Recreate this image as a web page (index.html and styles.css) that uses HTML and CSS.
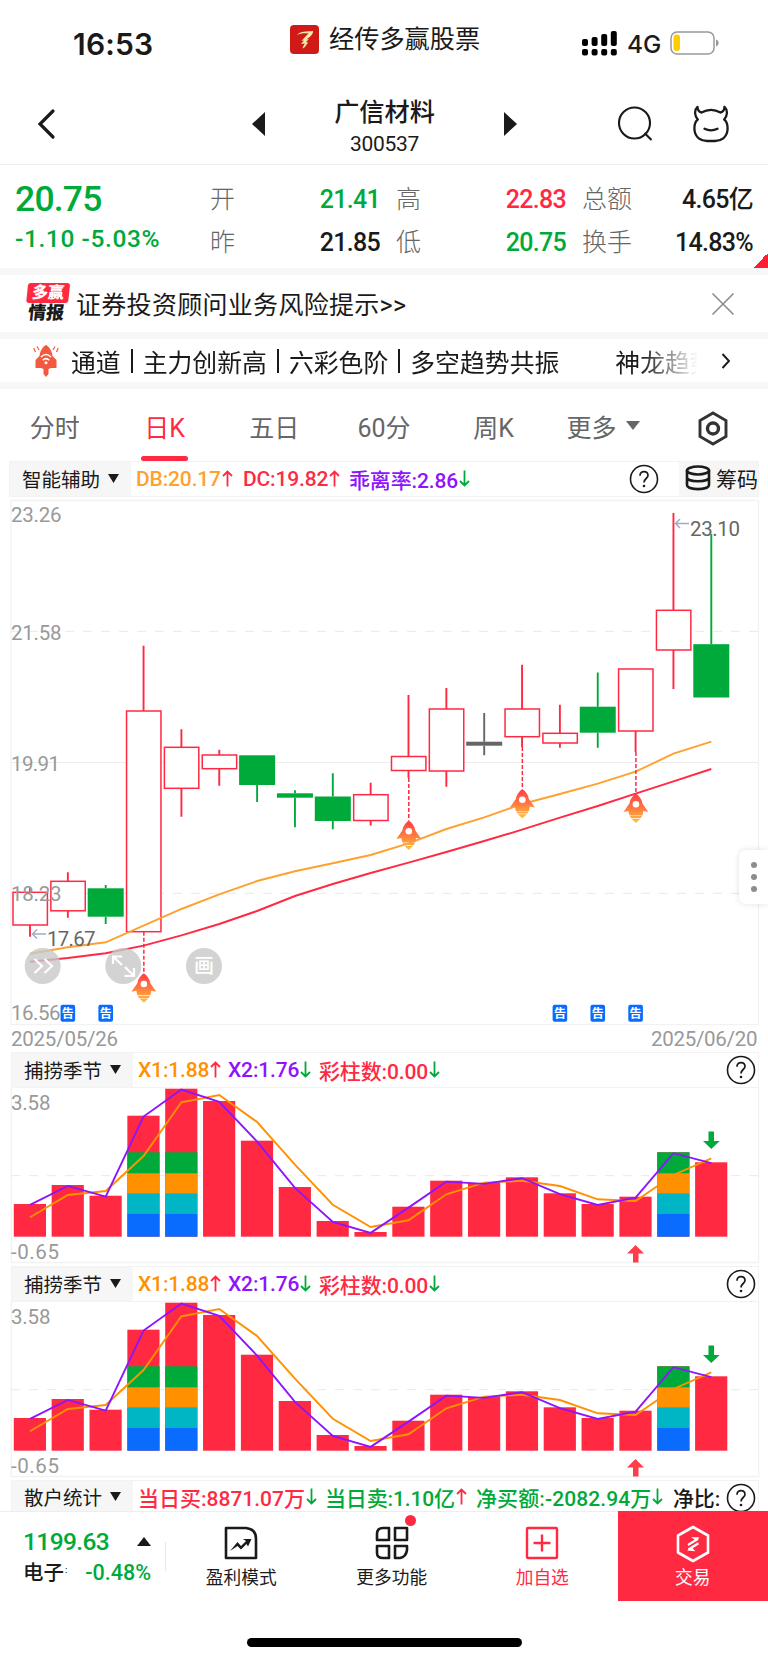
FILE: index.html
```html
<!DOCTYPE html>
<html lang="zh-CN">
<head>
  <meta charset="UTF-8">
  <title>广信材料 300537</title>
  <link rel="stylesheet" href="styles.css">
</head>

<body>
  <!-- shared icons -->
  <svg class="defs" width="0" height="0">
    <symbol id="up" viewBox="0 0 11 17"><path d="M5.5 16.500V1.500M1 6L5.500 1.500L10 6" fill="none" stroke="currentColor" stroke-width="1.800"/></symbol>
    <symbol id="down" viewBox="0 0 11 17"><path d="M5.500 .5V15.500M1 11L5.500 15.500L10 11" fill="none" stroke="currentColor" stroke-width="1.800"/></symbol>
    <symbol id="help" viewBox="0 0 30 30">
      <circle cx="15" cy="15" r="13.500" fill="none" stroke="currentColor" stroke-width="1.600"/>
      <path d="M11 11.800C11 9 12.700 7.600 15 7.600S19 9.200 19 11.500C19 14.500 15 14.600 15 18.400" fill="none" stroke="currentColor" stroke-width="1.700"/>
      <circle cx="15" cy="22" r="1.300" fill="currentColor"/>
    </symbol>
    <linearGradient id="flame" x1="0" y1="0" x2="0" y2="1">
      <stop offset="0" stop-color="#ff3b45"/><stop offset=".55" stop-color="#ff8040"/><stop offset="1" stop-color="#ffc53d"/>
    </linearGradient>
  </svg>

  <!-- Status bar -->
  <div class="statusBar">
    <div class="time">16:53</div>
    <div class="appName">
      <svg width="29" height="29" viewBox="0 0 29 29">
        <rect width="29" height="29" rx="4" fill="#d01a18"/>
        <path d="M7 10C10 6 17 6.500 23 6C23.500 9 20 12 16.500 14.500L19 14L16 17L18 17.500C16 20 15 23 12.500 23.500C13 21 14 20 15 18.500L11 19L14 15.500L11.500 16L15 12L18.500 8.500C14 8 10 8.500 7 10Z" fill="#f6e6a8"/>
      </svg>
      <span>经传多赢股票</span>
    </div>
    <div class="signal">
      <svg width="36" height="25" viewBox="0 0 36 25">
        <g fill="#000">
          <rect x="0" y="8" width="6" height="7" rx="2"/><rect x="9.600" y="6" width="6" height="9" rx="2"/>
          <rect x="19.200" y="3" width="6" height="12" rx="2"/><rect x="28.800" y="0" width="6" height="15" rx="2"/>
          <rect x="0" y="18" width="6" height="6.500" rx="2"/><rect x="9.600" y="18" width="6" height="6.500" rx="2"/>
          <rect x="19.200" y="18" width="6" height="6.500" rx="2"/><rect x="28.800" y="18" width="6" height="6.500" rx="2"/>
        </g>
      </svg>
      <span>4G</span>
      <svg width="50" height="24" viewBox="0 0 50 24">
        <rect x="1" y="1" width="43" height="22" rx="6" fill="#fff" stroke="#999" stroke-width="1.500"/>
        <rect x="3.500" y="3.500" width="6.500" height="16.500" rx="3" fill="#ffcc00"/>
        <path d="M46 8.500C49.500 9.500 49.500 14 46 15.500Z" fill="#999"/>
      </svg>
    </div>
  </div>

  <!-- Title -->
  <div class="navBar">
    <svg class="back" width="20" height="32" viewBox="0 0 20 32"><path d="M17 3L4 16L17 29" fill="none" stroke="#1a1a1a" stroke-width="3.200" stroke-linecap="round"/></svg>
    <div class="stockTitle">
      <svg width="13" height="24" viewBox="0 0 13 24"><path d="M13 0V24L0 12Z" fill="#1a1a1a"/></svg>
      <div class="names">
        <div class="name">广信材料</div>
        <div class="code">300537</div>
      </div>
      <svg width="13" height="24" viewBox="0 0 13 24"><path d="M0 0V24L13 12Z" fill="#1a1a1a"/></svg>
    </div>
    <div class="navIcons">
      <svg width="36" height="36" viewBox="0 0 36 36" fill="none" stroke="#1a1a1a" stroke-width="2.100">
        <circle cx="17.500" cy="17" r="15.500"/><path d="M27.500 27L34.500 34"/>
      </svg>
      <svg width="36" height="38" viewBox="0 0 36 38" fill="none" stroke="#1a1a1a" stroke-width="2.300" stroke-linecap="round" stroke-linejoin="round">
        <path d="M4.500 1.800C1 5 1.500 11 4.800 14.500C1.500 17 1.200 21 1.500 25C2.200 32.500 8 36 14 36H22C28 36 33.800 32.500 34.500 25C34.800 21 34.500 17 31.200 14.500C34.500 11 35 5 31.500 1.800C31.500 5 30 7 27.500 7.500C21 3.800 15 3.800 8.500 7.500C6 7 4.500 5 4.500 1.800Z"/>
        <path d="M11.500 23.800Q18 27 24.500 23.800"/>
      </svg>
    </div>
  </div>

  <!-- Quote -->
  <div class="quote">
    <div class="last">
      <div class="price">20.75</div>
      <div class="change">-1.10 -5.03%</div>
    </div>
    <div class="pair"><div><label>开</label><b class="green">21.41</b></div><div><label>昨</label><b>21.85</b></div></div>
    <div class="pair"><div><label>高</label><b class="red">22.83</b></div><div><label>低</label><b class="green">20.75</b></div></div>
    <div class="pair"><div><label>总额</label><b>4.65亿</b></div><div><label>换手</label><b>14.83%</b></div></div>
  </div>

  <div class="notice">
    <div class="newsLogo"><div class="newsTop">多赢</div><div class="newsBottom">情报</div></div>
    <span class="noticeText">证券投资顾问业务风险提示&gt;&gt;</span>
    <svg width="24" height="24" viewBox="0 0 24 24"><path d="M1.500 1.500L22.500 22.500M22.500 1.500L1.500 22.500" stroke="#8c8c8c" stroke-width="1.600"/></svg>
  </div>

  <div class="ticker">
    <svg class="tickerIcon" width="26" height="32" viewBox="0 0 26 32">
      <path d="M13 0C16.500 2 19 6 19.500 11L23.500 15V23H18L15.500 24V29L13 32L10.500 29V24L8 23H2.500V15L6.500 11C7 6 9.500 2 13 0Z" fill="#f4593f"/>
      <path d="M8 12Q13 7 18 12M9.800 15.200Q13 12 16.200 15.200" fill="none" stroke="#fff" stroke-width="1.600"/>
      <circle cx="13" cy="17.800" r="1.500" fill="#fff"/>
      <path d="M4 1.500L6 5M.8 3L2.500 7M22 1.500L20 5M25.200 3L23.500 7" stroke="#f4593f" stroke-width="1.200"/>
    </svg>
    <div class="tickerText"><span>通道</span><i></i><span>主力创新高</span><i></i><span>六彩色阶</span><i></i><span>多空趋势共振</span><span class="next">神龙趋势</span></div>
    <svg width="10" height="16" viewBox="0 0 10 16"><path d="M1.500 1L8 8L1.500 15" fill="none" stroke="#1a1a1a" stroke-width="1.900"/></svg>
  </div>

  <!-- Period tabs -->
  <div class="tabs">
    <div>分时</div>
    <div class="active">日K</div>
    <div>五日</div>
    <div>60分</div>
    <div>周K</div>
    <div>更多<svg width="14" height="9" viewBox="0 0 14 9"><path d="M0 0H14L7 9Z" fill="#666"/></svg></div>
    <div class="gear">
      <svg width="30" height="35" viewBox="0 0 30 35" fill="none" stroke="#333">
        <path d="M15 2L28 9.500V25.500L15 33L2 25.500V9.500Z" stroke-width="2.900"/><circle cx="15" cy="17.500" r="5.500" stroke-width="3.400"/>
      </svg>
    </div>
  </div>

  <div class="toolbar main">
    <div class="picker">智能辅助<svg width="11" height="9" viewBox="0 0 11 9"><path d="M0 0H11L5.500 9Z" fill="#1a1a1a"/></svg></div>
    <div class="values">
      <span class="orangeSoft w107">DB:20.17<svg class="red"><use href="#up"/></svg></span>
      <span class="red w106">DC:19.82<svg class="red"><use href="#up"/></svg></span>
      <span class="purple">乖离率:2.86<svg class="green"><use href="#down"/></svg></span>
    </div>
    <svg class="help"><use href="#help"/></svg>
    <div class="chips">
      <svg width="26" height="26" viewBox="0 0 26 26" fill="none" stroke="#1a1a1a" stroke-width="2.600">
        <ellipse cx="13" cy="5.500" rx="11" ry="4"/>
        <path d="M2 5.500V20C2 25.500 24 25.500 24 20V5.500M2 12.500C2 17.500 24 17.500 24 12.500"/>
      </svg>
      筹码
    </div>
  </div>

  <div class="kline">
    <svg id="kChart" width="768" height="555" viewBox="0 497 768 555"></svg>
    <div class="drawer"><i></i><i></i><i></i></div>
  </div>

  <div class="toolbar">
    <div class="picker">捕捞季节<svg width="11" height="9" viewBox="0 0 11 9"><path d="M0 0H11L5.500 9Z" fill="#1a1a1a"/></svg></div>
    <div class="values">
      <span class="orange w90">X1:1.88<svg class="red"><use href="#up"/></svg></span>
      <span class="purple w91">X2:1.76<svg class="green"><use href="#down"/></svg></span>
      <span class="red">彩柱数:0.00<svg class="green"><use href="#down"/></svg></span>
    </div>
    <svg class="help"><use href="#help"/></svg>
  </div>
  <svg class="subChart" width="768" height="178" viewBox="0 1088 768 178"></svg>

  <div class="toolbar">
    <div class="picker">捕捞季节<svg width="11" height="9" viewBox="0 0 11 9"><path d="M0 0H11L5.500 9Z" fill="#1a1a1a"/></svg></div>
    <div class="values">
      <span class="orange w90">X1:1.88<svg class="red"><use href="#up"/></svg></span>
      <span class="purple w91">X2:1.76<svg class="green"><use href="#down"/></svg></span>
      <span class="red">彩柱数:0.00<svg class="green"><use href="#down"/></svg></span>
    </div>
    <svg class="help"><use href="#help"/></svg>
  </div>
  <svg class="subChart" width="768" height="178" viewBox="0 1088 768 178"></svg>

  <div class="toolbar last-row">
    <div class="picker">散户统计<svg width="11" height="9" viewBox="0 0 11 9"><path d="M0 0H11L5.500 9Z" fill="#1a1a1a"/></svg></div>
    <div class="values">
      <span class="red w187">当日买:8871.07万<svg class="green"><use href="#down"/></svg></span>
      <span class="green w151">当日卖:1.10亿<svg class="red"><use href="#up"/></svg></span>
      <span class="green w197">净买额:-2082.94万<svg class="green"><use href="#down"/></svg></span>
      <span>净比:</span>
    </div>
    <svg class="help"><use href="#help"/></svg>
  </div>

  <!-- Bottom bar -->
  <div class="bottomBar">
    <div class="sector">
      <div class="row"><span class="index">1199.63</span><svg width="14" height="9" viewBox="0 0 14 9"><path d="M7 0L14 9H0Z" fill="#1a1a1a"/></svg></div>
      <div class="row"><span class="sectorName">电子<small>:</small></span><span class="pct">-0.48%</span></div>
    </div>
    <div class="item">
      <svg width="34" height="34" viewBox="0 0 34 34" fill="none" stroke="#1a1a1a" stroke-width="2.600">
        <path d="M2 2H22Q32 3 32 13V32H2Z" stroke-linejoin="round"/>
        <path d="M6 25L13.500 16L17 20L22 15L19 13H27.500L24 20.500L22.500 18L17 23.500L13.500 20Z" fill="#1a1a1a" stroke="none"/>
      </svg>
      <span>盈利模式</span>
    </div>
    <div class="item">
      <svg width="34" height="34" viewBox="0 0 34 34" fill="none" stroke="#1a1a1a" stroke-width="2.600">
        <path d="M14 2H8Q2 2 2 8V14H14ZM20 2H32V14H20ZM2 20H14V32H8Q2 32 2 27ZM20 20H32V24Q31 31 25 32H20Z" stroke-linejoin="round"/>
      </svg>
      <span>更多功能</span>
      <i class="dot"></i>
    </div>
    <div class="item red">
      <svg width="34" height="34" viewBox="0 0 34 34" fill="none" stroke="#ff2a42" stroke-width="2.400">
        <rect x="2" y="2" width="30" height="30" rx="1"/><path d="M17 8.500V25.500M8.500 17H25.500"/>
      </svg>
      <span>加自选</span>
    </div>
    <div class="item trade">
      <svg width="34" height="38" viewBox="0 0 34 38" fill="none" stroke="#fff" stroke-width="2.600">
        <path d="M17 2L32 10.500V27.500L17 36L2 27.500V10.500Z" stroke-linejoin="round"/>
        <path d="M12 20L22 13.800M22.500 18.200L12.500 24.500" stroke-width="2.200"/>
        <path d="M15 12.300H23.500L20 16.500L18.500 14.500ZM19.500 26.200L11 25.500L15.500 21.800L17 23.800Z" fill="#fff" stroke="none"/>
      </svg>
      <span>交易</span>
    </div>
  </div>
  <div class="homeIndicator"></div>

  <script src="chart.js"></script>
</body>
</html>
```

FILE: styles.css
```css
* { box-sizing: border-box; margin: 0; padding: 0; }
body {
  width: 768px;
  height: 1662px;
  font-family: Roboto, "Noto Sans CJK SC", sans-serif;
  background: #fff;
  color: #1a1a1a;
  overflow: hidden;
}
svg { display: block; flex-shrink: 0; }
.defs { position: absolute; }

.red { color: #ff2a42; }
.green { color: #00aa3a; }
.orange { color: #ff9100; }
.orangeSoft { color: #ffa12e; }
.purple { color: #9013fe; }

/* Status bar */
.statusBar {
  height: 80px;
  display: grid;
  grid-template-columns: 217px 292px 1fr;
  padding-left: 73px;
}
.time {
  font: 600 30px/36px Inter, sans-serif;
  letter-spacing: 0.2px;
  padding-top: 26px;
}
.appName {
  display: flex;
  gap: 10px;
  padding-top: 25px;
  font-size: 25.200px;
  line-height: 30px;
}
.signal {
  display: flex;
  gap: 9px;
  padding-top: 31px;
  font: 500 24.500px/27px Inter, sans-serif;
}

/* Title */
.navBar {
  height: 85px;
  display: flex;
  align-items: center;
  border-bottom: 1px solid #e9eeee;
  padding: 4px 39px 0 36px;
}
.stockTitle {
  display: flex;
  align-items: center;
  justify-content: space-between;
  width: 265px;
  margin-left: 196px;
}
.names { text-align: center; padding-top: 5px; }
.name { font-size: 25.200px; font-weight: 500; line-height: 29px; }
.code { font-size: 21px; line-height: 24px; margin-top: 5px; letter-spacing: -0.3px; }
.navIcons {
  display: flex;
  gap: 40px;
  margin-left: auto;
  align-items: center;
}

/* Quote */
.quote {
  height: 103px;
  display: grid;
  grid-template-columns: 179px 170px 170px 171px;
  column-gap: 16px;
  padding-left: 15px;
  background: linear-gradient(135deg, transparent 50%, #ff1f35 50%) right bottom / 15px 15px no-repeat;
}
.last { color: #00aa3a; font-weight: 500; padding-top: 13px; }
.price { font-size: 35.5px; line-height: 42px; letter-spacing: -0.8px; }
.change { font-size: 24.500px; line-height: 37px; letter-spacing: 0.6px; white-space: nowrap; }
.pair { padding-top: 13px; }
.pair div {
  display: flex;
  justify-content: space-between;
  font-size: 25px;
  line-height: 43px;
}
.pair label { color: #666; font-weight: 300; }
.pair b { font-weight: 500; letter-spacing: -0.7px; }

.notice {
  height: 71px;
  border: solid #f7f7f7;
  border-width: 7px 0;
  display: flex;
  align-items: center;
  padding: 0 33px 0 26px;
}
.newsLogo { width: 42px; margin-right: 8px; padding-bottom: 4px; transform: skewX(-6deg); font-weight: 900; text-align: center; }
.newsTop { background: #ff2a42; color: #fff; border-radius: 3px; font-size: 16px; line-height: 20px; height: 20px; }
.newsBottom { font-size: 18px; line-height: 20px; height: 18px; }
.noticeText { flex: 1; font-size: 25px; letter-spacing: 0.3px; padding-bottom: 1px; }

.ticker {
  height: 50px;
  border-bottom: 7px solid #f7f7f7;
  display: flex;
  align-items: center;
  padding-left: 33px;
}
.tickerText {
  display: flex;
  align-items: center;
  width: 633px;
  margin: 0 17px 0 12px;
  font-size: 24.850px;
  white-space: nowrap;
  overflow: hidden;
  -webkit-mask-image: linear-gradient(90deg, #000 90%, transparent 99%);
}
.tickerText i { width: 2px; height: 24px; background: #1a1a1a; margin: 0 10px; flex-shrink: 0; }
.tickerText .next { margin-left: 56px; }

/* Period tabs */
.tabs {
  height: 72px;
  display: grid;
  grid-template-columns: repeat(7, 1fr);
  color: #666;
  font-size: 25px;
}
.tabs div {
  position: relative;
  display: flex;
  align-items: center;
  justify-content: center;
  gap: 10px;
  padding-top: 1px;
}
.tabs .gear { padding-top: 6px; }
.tabs .active { color: #ff2a42; }
.tabs .active::after {
  content: "";
  position: absolute;
  bottom: 0;
  left: 31px;
  width: 47px;
  height: 5px;
  border-radius: 3px;
  background: #ff2a42;
}

/* Indicator bars */
.toolbar {
  height: 36px;
  margin: 0 9px 0 11px;
  border: 1px solid #f2f2f2;
  display: flex;
  align-items: center;
  font-size: 21px;
  white-space: nowrap;
}
.toolbar.main { margin-left: 9px; }
.toolbar.last-row { height: 31px; border-bottom: 0; overflow: hidden; align-items: flex-start; }
.toolbar.last-row .picker,
.toolbar.last-row .values { height: 32px; }
.toolbar.last-row .help { margin-top: 2px; }
.picker {
  width: 121px;
  height: 100%;
  background: #f6f6f6;
  display: flex;
  align-items: center;
  gap: 8px;
  padding: 0 0 2px 12px;
  font-size: 19.500px;
}
.values { display: flex; align-items: center; flex: 1; padding: 0 0 1px 5px; font-weight: 500; letter-spacing: -0.15px; }
.values span { display: flex; align-items: center; gap: 1px; }
.values svg { width: 11px; height: 17px; }
.w90 { width: 90px; }
.w91 { width: 91px; }
.w106 { width: 106px; }
.w107 { width: 107px; }
.w151 { width: 151px; }
.w187 { width: 187px; letter-spacing: 0; }
.w197 { width: 197px; letter-spacing: 0.1px; }
.help { width: 30px; height: 30px; margin-right: 2px; }
.main .help { margin-right: 20px; }
.chips {
  width: 79px;
  height: 100%;
  background: #f6f6f6;
  display: flex;
  align-items: center;
  gap: 5px;
  padding: 0 0 2px 6px;
}

.kline { position: relative; height: 555px; }
.drawer {
  position: absolute;
  right: 0;
  top: 353px;
  width: 29px;
  height: 54px;
  background: #fff;
  border-radius: 7px 0 0 7px;
  box-shadow: 0 0 6px rgba(0,0,0,0.12);
  display: flex;
  flex-direction: column;
  align-items: center;
  justify-content: center;
  gap: 6px;
}
.drawer i { width: 6px; height: 6px; border-radius: 50%; background: #8c8c8c; }

svg .axis { font-size: 20.500px; fill: #999; }
svg .mark { font-size: 20.500px; fill: #666; }
svg .badge { font-size: 12px; font-weight: 700; fill: #fff; text-anchor: middle; }
svg .tool { font-size: 20px; font-weight: 500; fill: #fff; text-anchor: middle; }

/* Bottom bar */
.bottomBar {
  height: 90px;
  display: grid;
  grid-template-columns: 166px repeat(4, 1fr);
  border-top: 1px solid #eee;
}
.sector {
  padding: 14px 15px 0 23px;
  background: linear-gradient(#e8e8e8, #e8e8e8) right 30px / 1px 29px no-repeat;
}
.sector .row { display: flex; justify-content: space-between; align-items: center; height: 31px; font-weight: 500; }
.index { color: #00aa3a; font-size: 24.500px; letter-spacing: -0.6px; }
.sectorName { font-size: 20.500px; padding-bottom: 3px; }
.sectorName small { font-size: 9px; vertical-align: 7px; margin-left: 1px; }
.pct { color: #00aa3a; font-size: 21.500px; }
.item {
  position: relative;
  display: flex;
  flex-direction: column;
  align-items: center;
  justify-content: flex-end;
  gap: 6px;
  font-size: 17.700px;
  line-height: 24px;
  padding-bottom: 11px;
}
.item .dot { position: absolute; left: 88px; top: 3px; width: 11px; height: 11px; border-radius: 50%; background: #ff2a42; }
.item.trade { background: #ff2a42; color: #fff; gap: 3px; margin-top: -1px; }

.homeIndicator { width: 275px; height: 9px; border-radius: 5px; background: #000; margin: 37px auto 0 247px; }
```

FILE: chart.js
```js
const RED = '#ff2a42', GREEN = '#00aa3a', GRAY = '#666';
const cx = i => 30 + i * 37.85;

// colour, high, body top, body bottom, low
const candles = [
  [RED, 888, 892.3, 925, 936.7], [RED, 872.3, 881.3, 910.8, 917.7], [GREEN, 885, 888.3, 916.7, 924],
  [RED, 645.7, 711, 931.7, 931.7], [RED, 729.3, 747.3, 788.3, 816.7], [RED, 749.7, 755, 768.7, 785.7],
  [GREEN, 755.3, 755.3, 785, 802], [GREEN, 790.3, 793.3, 797.7, 827.3], [GREEN, 773.3, 796.5, 821, 829.3],
  [RED, 782.7, 794.7, 820.5, 825.5], [RED, 695, 756.5, 770.5, 778], [RED, 688, 709, 771, 786.7],
  [GRAY, 713, 741.7, 745.7, 755.3], [RED, 664.7, 709, 736.7, 747], [RED, 704.7, 733.3, 743, 747.7],
  [GREEN, 672.5, 706.7, 732.7, 747.7], [RED, 669, 669, 731, 752], [RED, 513, 610.3, 650, 689],
  [GREEN, 534, 644.2, 697.5, 697.5]
];
const db = [953.7, 947.3, 942.3, 925.7, 909, 894.3, 881, 871.3, 863.3, 855, 843.3, 829, 817.3, 804, 794, 783.7, 771.7, 753.7, 741.7];
const dc = [961.7, 958, 953.3, 945.7, 935.3, 924, 911, 896, 884, 873, 862.7, 852, 841, 829.7, 817.7, 806, 793.7, 781.3, 769];
const rockets = { 3: 973.3, 10: 820.5, 13: 789, 16: 793.5 };

const line = (ys, color, w) =>
  `<polyline points="${ys.map((y, i) => cx(i) + ',' + y).join(' ')}" fill="none" stroke="${color}" stroke-width="${w}"/>`;
const text = (x, y, w, s, cls = 'axis') =>
  `<text class="${cls}" x="${x}" y="${y}" textLength="${w}">${s}</text>`;
const grid = (y, dash) =>
  `<path d="M11 ${y}H758" stroke="#ededed" stroke-width="1.2" ${dash ? 'stroke-dasharray="9 9"' : ''}/>`;

function drawKline() {
  let s = '<rect x="11" y="500.5" width="747.500" height="524" fill="none" stroke="#f2f2f2" stroke-width="1.300"/>';
  s += grid(631.3, true) + grid(762.5) + grid(893.3, true);

  candles.forEach(([c, h, t, b, l], i) => {
    const x = cx(i);
    s += `<path d="M${x} ${h}V${t}M${x} ${b}V${l}" stroke="${c}" stroke-width="1.900"/>`;
    if (c === RED) s += `<rect x="${x - 17}" y="${t}" width="34.400" height="${b - t}" fill="#fff" stroke="${c}" stroke-width="1.500"/>`;
    else s += `<rect x="${x - 18}" y="${t}" width="36" height="${b - t}" fill="${c}"/>`;
  });

  s += line(db, '#ffa12e', 1.9) + line(dc, RED, 1.9);

  for (const i in rockets) {
    const x = cx(i) + 0.3, y = rockets[i];
    s += `<path d="M${x} ${candles[i][4]}V${y}" stroke="${RED}" stroke-width="1.500" stroke-dasharray="4 2"/>
      <g transform="translate(${x - 12.5} ${y})">
        <path d="M12.500 0C16 2.500 18.500 6 19 10L25 18.500L20 17.500L19 22H6L5 17.500L0 18.500L6 10C6.500 6 9 2.500 12.500 0ZM6.500 22.600H18.500L17.500 24.600H7.500ZM8 25.200H17L12.500 29.500Z" fill="url(#flame)"/>
        <circle cx="12.500" cy="10.700" r="3.300" fill="#fff"/>
      </g>`;
  }

  // floating tools
  [42.7, 123.3, 204].forEach(x => s += `<circle cx="${x}" cy="966" r="18" fill="#c8c8c8" fill-opacity=".8"/>`);
  s += `<path d="M34.500 959L42 966L34.500 973M44.500 959L52 966L44.500 973M113 964V956.500H122M113.500 957L122 965M125 967L133 975M134 968V976H124.500" fill="none" stroke="#fff" stroke-width="2.200"/>`;
  s += '<text class="tool" x="204" y="973">画</text>';

  [1, 2, 14, 15, 16].forEach(i => {
    s += `<rect x="${cx(i) - 7.3}" y="1004.700" width="14.600" height="17" rx="2" fill="#0a6cff"/>
      <text class="badge" x="${cx(i)}" y="1017.700">告</text>`;
  });

  s += text(11, 521.5, 50.5, '23.26') + text(11, 640, 50.5, '21.58') + text(11, 771, 49, '19.91');
  s += text(11, 901, 50.5, '18.23') + text(11, 1019.5, 49.5, '16.56');
  s += text(11, 1046, 107, '2025/05/26') + text(651, 1046, 106.5, '2025/06/20');
  s += '<path d="M689 523.500H675.500M680 519L675.500 523.500L680 528M46 934H32.500M37 929.500L32.500 934L37 938.500" fill="none" stroke="#a3acc0" stroke-width="1.500"/>';
  s += text(690, 536, 50, '23.10', 'mark') + text(47, 946, 48.5, '17.67', 'mark');
  document.getElementById('kChart').innerHTML = s;
}

const bars = [1204, 1185, 1195.7, 1115.7, 1088.7, 1101, 1140.7, 1187, 1221, 1232, 1206.7, 1180.7, 1183, 1177.3, 1193.3, 1204, 1196.7, 1152.3, 1162.3];
const x1 = [1217.3, 1195, 1191, 1156, 1102.3, 1095, 1122, 1164.7, 1204.7, 1227, 1220.3, 1194.3, 1182.7, 1180.7, 1186, 1199.3, 1201, 1175, 1158.3];
const stack = [[1152.3, 1173.3, GREEN], [1173.3, 1193.7, '#ff9100'], [1193.7, 1214, '#00b6c4'], [1214, 1236.7, '#0a6cff']];

function drawSub(el) {
  let s = '<path d="M11.300 1088V1262.500H758.700V1088" fill="none" stroke="#f2f2f2" stroke-width="1.300"/>' + grid(1175.7, true);
  bars.forEach((y, i) => {
    const x = cx(i) - 16.2;
    s += `<rect x="${x}" y="${y}" width="32.200" height="${1236.7 - y}" fill="${RED}"/>`;
    if ([3, 4, 17].includes(i)) {
      stack.forEach(([a, b, c]) => s += `<rect x="${x}" y="${a}" width="32.200" height="${b - a}" fill="${c}"/>`);
    }
  });
  s += line(x1, '#ff9100', 1.9) + line(bars.map(y => y + 0.9), '#9013fe', 1.9);
  s += '<path d="M708.500 1131.500H714V1141H719.700L711.300 1149L703 1141H708.500Z" fill="#00aa3a"/>';
  s += '<path d="M635.500 1245L644 1253.500H638.500V1262.500H633V1253.500H627Z" fill="#ff3d4a"/>';
  s += text(11, 1110, 39.5, '3.58') + text(11, 1258.5, 48, '-0.65');
  el.innerHTML = s;
}

drawKline();
document.querySelectorAll('.subChart').forEach(drawSub);
```
